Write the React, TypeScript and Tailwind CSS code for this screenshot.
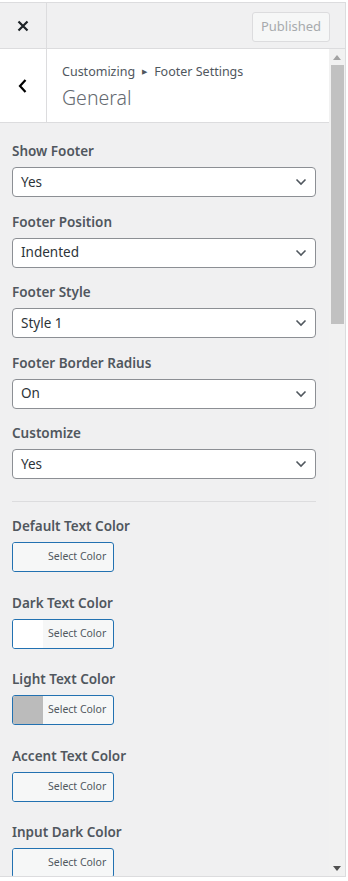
import React from "react";

const font = { fontFamily: '"Noto Sans", "Open Sans", sans-serif' };

function Chevron() {
  return (
    <svg width="12" height="8" viewBox="0 0 12 8" className="shrink-0">
      <path d="M1.5 1.5 L6 6 L10.5 1.5" fill="none" stroke="#50575e" strokeWidth="1.6" />
    </svg>
  );
}

function SelectField({ label, value }: { label: string; value: string }) {
  return (
    <div className="mb-[14.5px] flex flex-col">
      <div className="h-[20px] mb-[6px] text-[13.5px] leading-[20px] font-semibold text-[#50575e]">{label}</div>
      <div className="h-[30px] w-[304px] bg-white border border-[#8c8f94] rounded-[4px] flex items-center justify-between pl-[8px] pr-[8px]">
        <span className="text-[13.5px] text-[#2c3338]">{value}</span>
        <Chevron />
      </div>
    </div>
  );
}

function ColorField({ label, swatch }: { label: string; swatch: string }) {
  return (
    <div className="mb-[20.5px] flex flex-col">
      <div className="h-[20px] mb-[6px] text-[13.5px] leading-[20px] font-semibold text-[#50575e]">{label}</div>
      <div className="h-[30px] w-[102px] border border-[#2271b1] rounded-[3px] bg-[#f6f7f7] flex overflow-hidden">
        <div className="w-[30px] h-full" style={{ backgroundColor: swatch }} />
        <div className="flex-1 flex items-center pl-[5px] text-[10.5px] text-[#50575e]">Select Color</div>
      </div>
    </div>
  );
}

export default function App() {
  return (
    <div className="w-[348px] h-[881px] bg-white pt-[2px]" style={font}>
      <div className="w-[346px] h-[875px] border-t border-r border-b border-[#dcdcde] bg-[#f0f0f1] flex flex-col overflow-hidden">
        {/* header */}
        <div className="h-[46px] shrink-0 flex border-b border-[#dcdcde]">
          <div className="w-[47px] border-r border-[#dcdcde] flex items-center justify-center">
            <svg width="12" height="12" viewBox="0 0 12 12">
              <path d="M1.5 1.5 L10.5 10.5 M10.5 1.5 L1.5 10.5" stroke="#1d2327" strokeWidth="2.2" />
            </svg>
          </div>
          <div className="flex-1 flex items-center justify-end pr-[15px] pt-[2px]">
            <div className="h-[30px] w-[78px] border border-[#dcdcde] bg-[#f6f7f7] rounded-[3px] flex items-center justify-center text-[13px] text-[#a7aaad]">
              Published
            </div>
          </div>
        </div>
        {/* body */}
        <div className="flex-1 flex min-h-0">
          <div className="flex-1 min-w-0 overflow-hidden">
            <div className="h-[74px] bg-white border-b border-[#dcdcde] flex">
              <div className="w-[47px] border-r border-[#dcdcde] flex items-center justify-center">
                <svg width="10" height="16" viewBox="0 0 10 16">
                  <path d="M7.5 2 L2 8 L7.5 14" fill="none" stroke="#000" strokeWidth="2.2" />
                </svg>
              </div>
              <div className="pl-[15px] pt-[14px]">
                <div className="text-[12.5px] leading-[18px] text-[#50575e] flex items-center">
                  Customizing
                  <span className="mx-[7px] text-[7px] text-[#50575e]">▶</span>
                  Footer Settings
                </div>
                <div className="text-[19.5px] leading-[28px] font-light text-[#646970] mt-[3px]">General</div>
              </div>
            </div>
            <div className="px-[12px] pt-[18px] flex flex-col">
              <SelectField label="Show Footer" value="Yes" />
              <SelectField label="Footer Position" value="Indented" />
              <SelectField label="Footer Style" value="Style 1" />
              <SelectField label="Footer Border Radius" value="On" />
              <SelectField label="Customize" value="Yes" />
              <div className="w-[304px] h-px shrink-0 bg-[#dcdcde] mt-[7.5px] mb-[14px]" />
              <ColorField label="Default Text Color" swatch="#f6f7f7" />
              <ColorField label="Dark Text Color" swatch="#ffffff" />
              <ColorField label="Light Text Color" swatch="#bbbbbb" />
              <ColorField label="Accent Text Color" swatch="#f6f7f7" />
              <ColorField label="Input Dark Color" swatch="#f6f7f7" />
            </div>
          </div>
          {/* scrollbar */}
          <div className="w-[16px] shrink-0 bg-[#f1f1f1] flex flex-col items-center">
            <div className="h-[16px] flex items-center justify-center">
              <svg width="8" height="5" viewBox="0 0 8 5"><path d="M0 5 L4 0 L8 5 Z" fill="#a3a3a3" /></svg>
            </div>
            <div className="w-[13px] h-[259px] bg-[#c1c1c1]" />
            <div className="flex-1" />
            <div className="h-[16px] flex items-center justify-center">
              <svg width="8" height="5" viewBox="0 0 8 5"><path d="M0 0 L8 0 L4 5 Z" fill="#505050" /></svg>
            </div>
          </div>
        </div>
      </div>
    </div>
  );
}
